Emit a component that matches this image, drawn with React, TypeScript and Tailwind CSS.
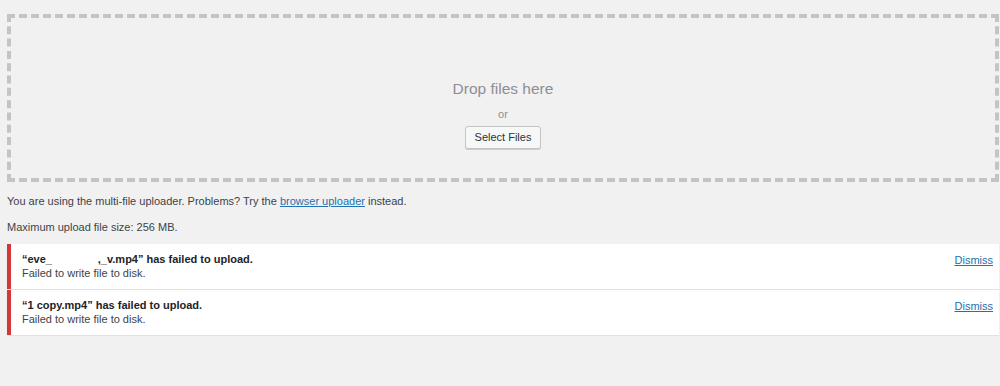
const notices = [
  { file: '“eve_               ,_v.mp4”', msg: 'Failed to write file to disk.' },
  { file: '“1 copy.mp4”', msg: 'Failed to write file to disk.' },
]

const UploadNotice = ({ file, msg }: { file: string; msg: string }) => (
  <div className="flex items-start justify-between border-l-4 border-[#d63638] bg-white pl-[11px] pr-[6px] pt-[8px] pb-[9px] shadow-[0_1px_1px_rgba(0,0,0,0.06)]">
    <div className="leading-[14px]">
      <div className="whitespace-pre font-bold text-[#1d2327]">{file} has failed to upload.</div>
      <div className="text-[#3c434a]">{msg}</div>
    </div>
    <a href="#" className="text-[#2271b1] underline">Dismiss</a>
  </div>
)

export default function App() {
  return (
    <div className="h-[386px] w-[1000px] overflow-hidden bg-[#f1f1f1] pl-[7px] pr-[1px] pt-[14px] text-[11px] text-[#3c434a] font-['Liberation_Sans',Arial,sans-serif]">
      {/* drop zone */}
      <div className="flex h-[168px] flex-col items-center border-4 border-dashed border-[#c3c4c7] pt-[61px]">
        <p className="text-[15.5px] leading-[20px] text-[#8c8f94]">Drop files here</p>
        <p className="mt-[8px] text-[11px] leading-[14px] text-[#8c8f94]">or</p>
        <button className="mt-[5px] h-[23px] rounded-[3px] border border-[#c3c4c7] bg-[#f6f7f7] px-[9px] text-[11px] text-[#2c3338] shadow-[0_1px_0_#ccc]">
          Select Files
        </button>
      </div>

      <p className="mt-[11px] leading-[16px]">
        You are using the multi-file uploader. Problems? Try the{' '}
        <a href="#" className="text-[#2271b1] underline">browser uploader</a> instead.
      </p>
      <p className="mt-[10px] leading-[16px]">Maximum upload file size: 256 MB.</p>

      <div className="mt-[9px] flex flex-col gap-px">
        {notices.map((n, i) => (
          <UploadNotice key={i} file={n.file} msg={n.msg} />
        ))}
      </div>
    </div>
  )
}
